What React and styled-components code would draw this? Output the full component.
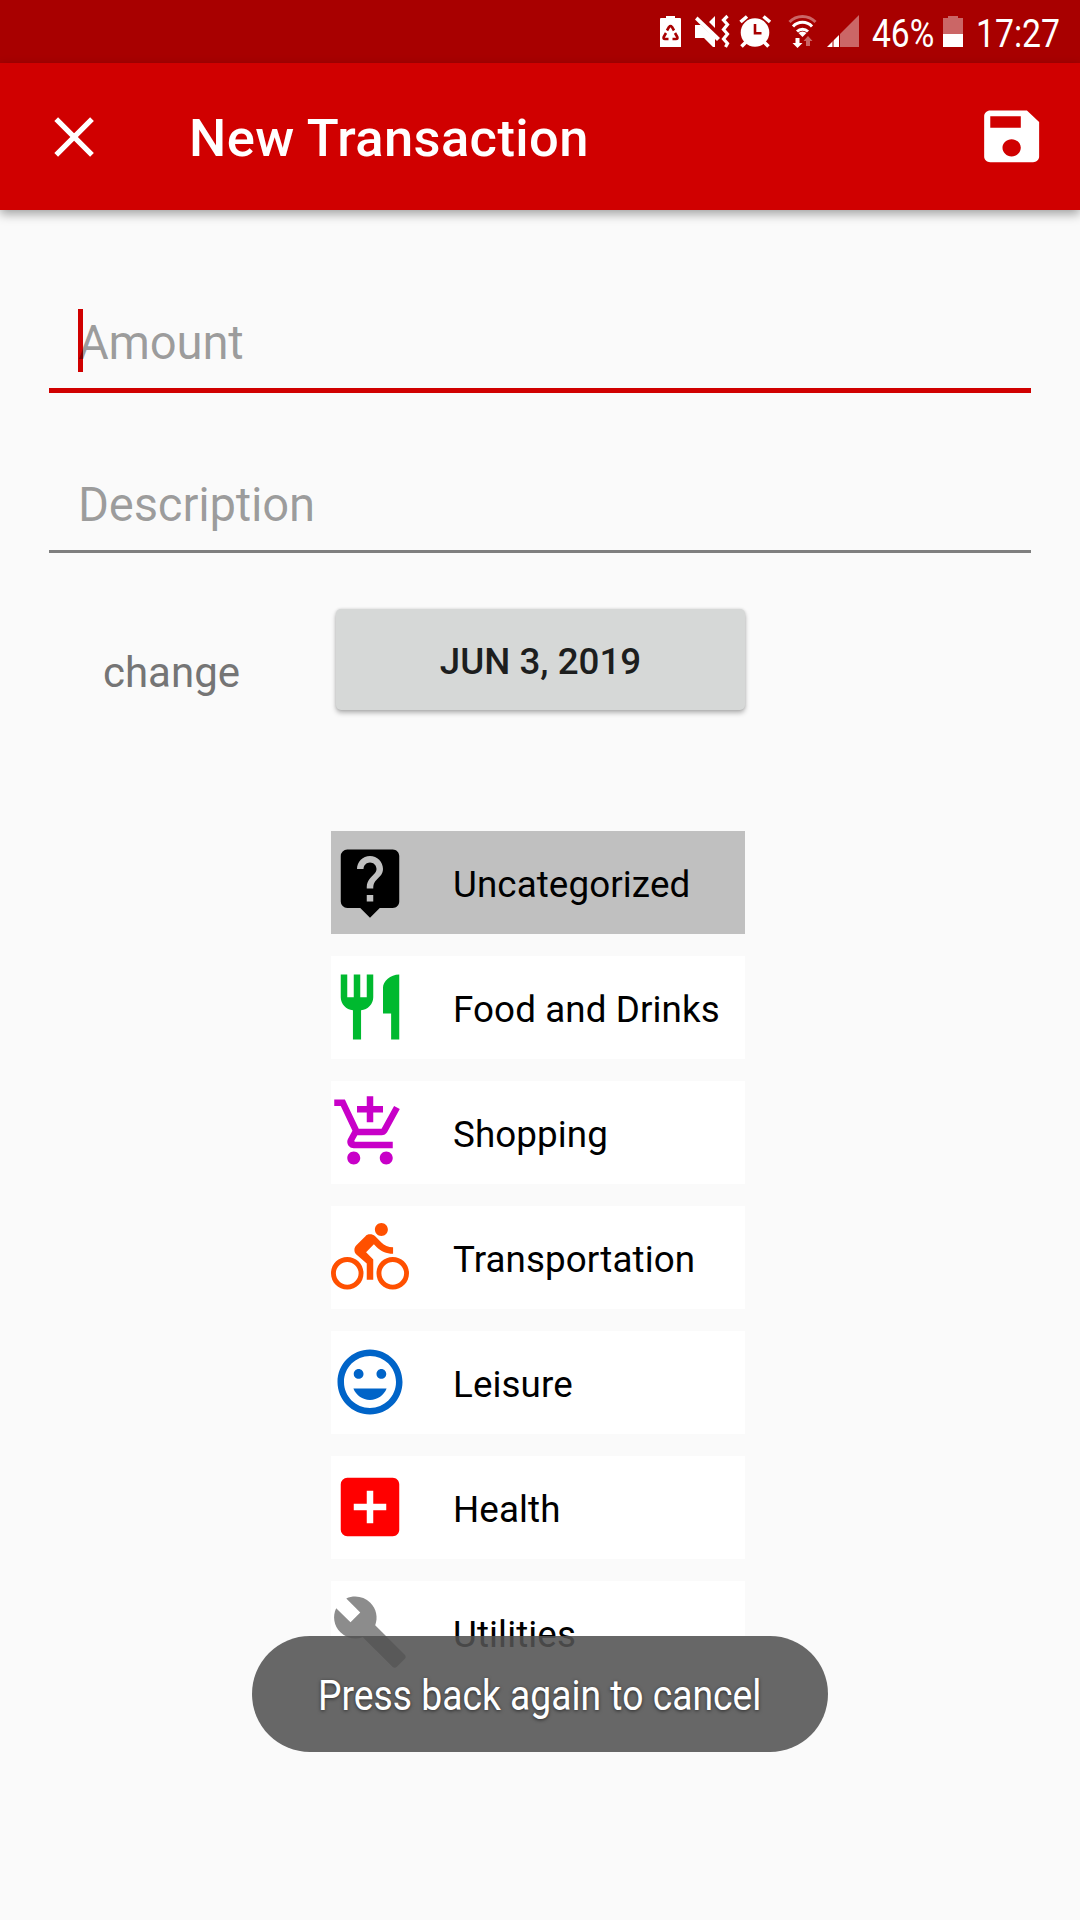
import React from "react";
import styled, { createGlobalStyle } from "styled-components";
import { MdLiveHelp, MdRestaurant, MdAddShoppingCart, MdDirectionsBike, MdMood, MdAddBox, MdBuild } from "react-icons/md";

const GlobalStyle = createGlobalStyle`
  * { box-sizing: border-box; }
  body { margin: 0; background: #fafafa; font-family: Roboto, "Liberation Sans", sans-serif; }
`;

const Screen = styled.main`
  position: relative;
  display: flex;
  flex-direction: column;
  width: 1080px;
  height: 1920px;
  overflow: hidden;
  background: #fafafa;
`;

const StatusBar = styled.div`
  display: flex;
  height: 63px;
  background: #a80000;
  color: #fff;
  justify-content: flex-end;
  padding-right: 20px;
`;

const StatusIcons = styled.svg`
  display: block;
  width: 213px;
  height: 63px;
`;

const StatusText = styled.span`
  width: ${(p) => p.$width}px;
  font-size: 39px;
  line-height: 68px;
  white-space: nowrap;
`;

const Condensed = styled.span`
  display: inline-block;
  transform: scaleX(${(p) => p.$scale});
  transform-origin: left center;
`;

const BatteryIcon = styled.svg`
  display: block;
  width: 20px;
  height: 63px;
  margin-right: 13px;
`;

const AppBar = styled.header`
  display: flex;
  align-items: center;
  height: 147px;
  padding: 0 32px 0 50px;
  background: #d00000;
  color: #fff;
  box-shadow: 0 4px 10px rgba(0, 0, 0, 0.36);
`;

const CloseIcon = styled.svg`
  width: 48px;
  height: 48px;
`;

const Title = styled.h1`
  flex: 1;
  margin: 0;
  padding: 3px 0 0 91px;
  font-size: 52.5px;
  font-weight: 500;
  line-height: 62px;
  letter-spacing: 0.38px;
`;

const SaveIcon = styled.svg`
  width: 73.3px;
  height: 68.8px;
  margin-bottom: 1px;
`;

const Form = styled.section`
  display: flex;
  flex-direction: column;
  padding: 78px 49px 0;
`;

const Field = styled.label`
  display: flex;
  align-items: center;
  height: ${(p) => p.$height}px;
  padding: ${(p) => p.$top}px 29px 0;
  border-bottom: ${(p) => (p.$active ? "5px solid #d00000" : "3px solid #7f7f7f")};
  color: rgba(0, 0, 0, 0.38);
  font-size: 47.25px;
  line-height: 63px;
  letter-spacing: -0.2px;
`;

const Hint = styled.span`
  padding-top: 5px;
`;

const Caret = styled.span`
  width: 5px;
  height: 63px;
  margin-right: -5px;
  background: #d00000;
`;

const DateRow = styled.div`
  display: flex;
  height: 102px;
  margin-top: 56px;
  padding-left: 54px;
`;

const DateLabel = styled.span`
  width: 233px;
  padding-top: 39px;
  color: #757575;
  font-size: 42px;
  line-height: 50px;
`;

const DateButton = styled.button`
  width: 409px;
  height: 101px;
  padding: 4px 0 0;
  border: 0;
  border-radius: 5px;
  background: #d6d8d7;
  color: #1d1e1e;
  font: 500 36.75px/44px Roboto, "Liberation Sans", sans-serif;
  box-shadow: 0 3px 5px rgba(0, 0, 0, 0.28), 0 0 3px rgba(0, 0, 0, 0.14);
`;

const CategoryList = styled.ul`
  display: flex;
  flex-direction: column;
  gap: 22px;
  margin: 120px 0 0 331px;
  padding: 0;
  list-style: none;
`;

const Category = styled.li`
  display: flex;
  align-items: center;
  width: 414px;
  height: 103px;
  background: ${(p) => (p.$selected ? "#c0c0c0" : "#fff")};
  color: #000;
  font-size: 36.75px;
  line-height: 44px;
  letter-spacing: 0.1px;

  svg {
    width: 78px;
    height: 78px;
    margin: 0 44px 2px 0;
    color: ${(p) => p.$color};
  }
`;

const CategoryName = styled.span`
  padding-top: 4px;
`;

const Toast = styled.div`
  position: absolute;
  left: 252px;
  top: 1636px;
  width: 576px;
  height: 116px;
  padding: 4px 0 0 66px;
  border-radius: 58px;
  background: rgba(82, 82, 82, 0.88);
  color: #fff;
  font-size: 42px;
  line-height: 112px;
  white-space: nowrap;
  text-shadow: 0 1px 4px rgba(0, 0, 0, 0.6);
`;

const categories = [
  { name: "Uncategorized", icon: MdLiveHelp, color: "#000", selected: true },
  { name: "Food and Drinks", icon: MdRestaurant, color: "#00b92f" },
  { name: "Shopping", icon: MdAddShoppingCart, color: "#c800c8" },
  { name: "Transportation", icon: MdDirectionsBike, color: "#ff5000" },
  { name: "Leisure", icon: MdMood, color: "#0064c8" },
  { name: "Health", icon: MdAddBox, color: "#ff0000" },
  { name: "Utilities", icon: MdBuild, color: "#8c8c8c" },
];

function StatusSymbols() {
  return (
    <StatusIcons viewBox="659 0 213 63" fill="#fff">
      <path d="M661 18h5v-2h9v2h5a1 1 0 0 1 1 1v28h-21V19a1 1 0 0 1 1-1z" />
      <g fill="none" stroke="#a80000" strokeWidth="2.6" strokeLinejoin="round">
        <path d="M667 30.500l2-3.500q1.500-1.800 3 0l2 3.500" />
        <path d="M666 33l-2.300 4q-.7 2 1.300 2h3.500" />
        <path d="M675 33l2.300 4q.7 2-1.300 2h-3.500" />
      </g>
      <path d="M697.500 16.500l22.500 21.500-3 3-22-21.500z" />
      <path d="M709 22l6-6v12z" />
      <path d="M695 25h6l14 13v9h-2l-9-9h-9z" />
      <path d="M727.500 16l-4 4 4 4.500-4 5 4 4.500-4 5 4 4.500-2 3.500" fill="none" stroke="#fff" strokeWidth="3.200" />
      <circle cx="755" cy="32.500" r="14.300" />
      <path d="M740.500 22l6.500-5.500M763.500 16.500l6.500 5.500M746 42l-4.500 4.500M764 42l4.500 4.500" stroke="#fff" strokeWidth="3.600" />
      <path d="M755 24v9.200h6.500" stroke="#a80000" strokeWidth="2.600" fill="none" />
      <g fill="none" stroke="#fff" strokeWidth="3">
        <path d="M789.500 22a18 18 0 0 1 26 0" opacity=".4" />
        <path d="M793 26.500a13 13 0 0 1 19 0M797 31.500a8 8 0 0 1 11 0" />
      </g>
      <path d="M798.500 33a6 6 0 0 1 8 0l-4 4zM795.500 38h4v5h3l-5 5-5-5h3z" />
      <path d="M808 36l4.500 5h-2.500v5h-4v-5h-2.500z" opacity=".4" />
      <path d="M859 15v32h-19v-13z" opacity=".4" />
      <path d="M839 35v12h-12z" />
      <path d="M833 40v7" stroke="#a80000" />
    </StatusIcons>
  );
}

export default function App() {
  return (
    <Screen>
      <GlobalStyle />
      <StatusBar>
        <StatusSymbols />
        <StatusText $width={71}><Condensed $scale={0.86}>46%</Condensed></StatusText>
        <BatteryIcon viewBox="943 0 20 63">
          <path d="M943 18h5v-2h10v2h5v16h-20z" fill="#fff" opacity=".4" />
          <path d="M943 34h20v13h-20z" fill="#fff" />
        </BatteryIcon>
        <StatusText $width={84}><Condensed $scale={0.865}>17:27</Condensed></StatusText>
      </StatusBar>
      <AppBar>
        <CloseIcon viewBox="50 113 48 48" stroke="#fff" strokeWidth="5.300">
          <path d="M56.200 119.100l35.800 35.800M92 119.100l-35.800 35.800" />
        </CloseIcon>
        <Title>New Transaction</Title>
        <SaveIcon viewBox="0 0 24 24" preserveAspectRatio="none" fill="#fff">
          <path d="M17 3H5c-1.110 0-2 .9-2 2v14c0 1.100.89 2 2 2h14c1.100 0 2-.9 2-2V7l-4-4zm-5 16c-1.660 0-3-1.340-3-3s1.340-3 3-3 3 1.340 3 3-1.340 3-3 3zm3-10H5V5h10v4z" />
        </SaveIcon>
      </AppBar>
      <Form>
        <Field $active $height={105} $top={5}><Caret /><Hint>Amount</Hint></Field>
        <Field $height={160} $top={62}><Hint>Description</Hint></Field>
        <DateRow>
          <DateLabel>change</DateLabel>
          <DateButton>JUN 3, 2019</DateButton>
        </DateRow>
      </Form>
      <CategoryList>
        {categories.map(({ name, icon: Icon, color, selected }) => (
          <Category key={name} $color={color} $selected={selected}>
            <Icon />
            <CategoryName>{name}</CategoryName>
          </Category>
        ))}
      </CategoryList>
      <Toast><Condensed $scale={0.887}>Press back again to cancel</Condensed></Toast>
    </Screen>
  );
}
